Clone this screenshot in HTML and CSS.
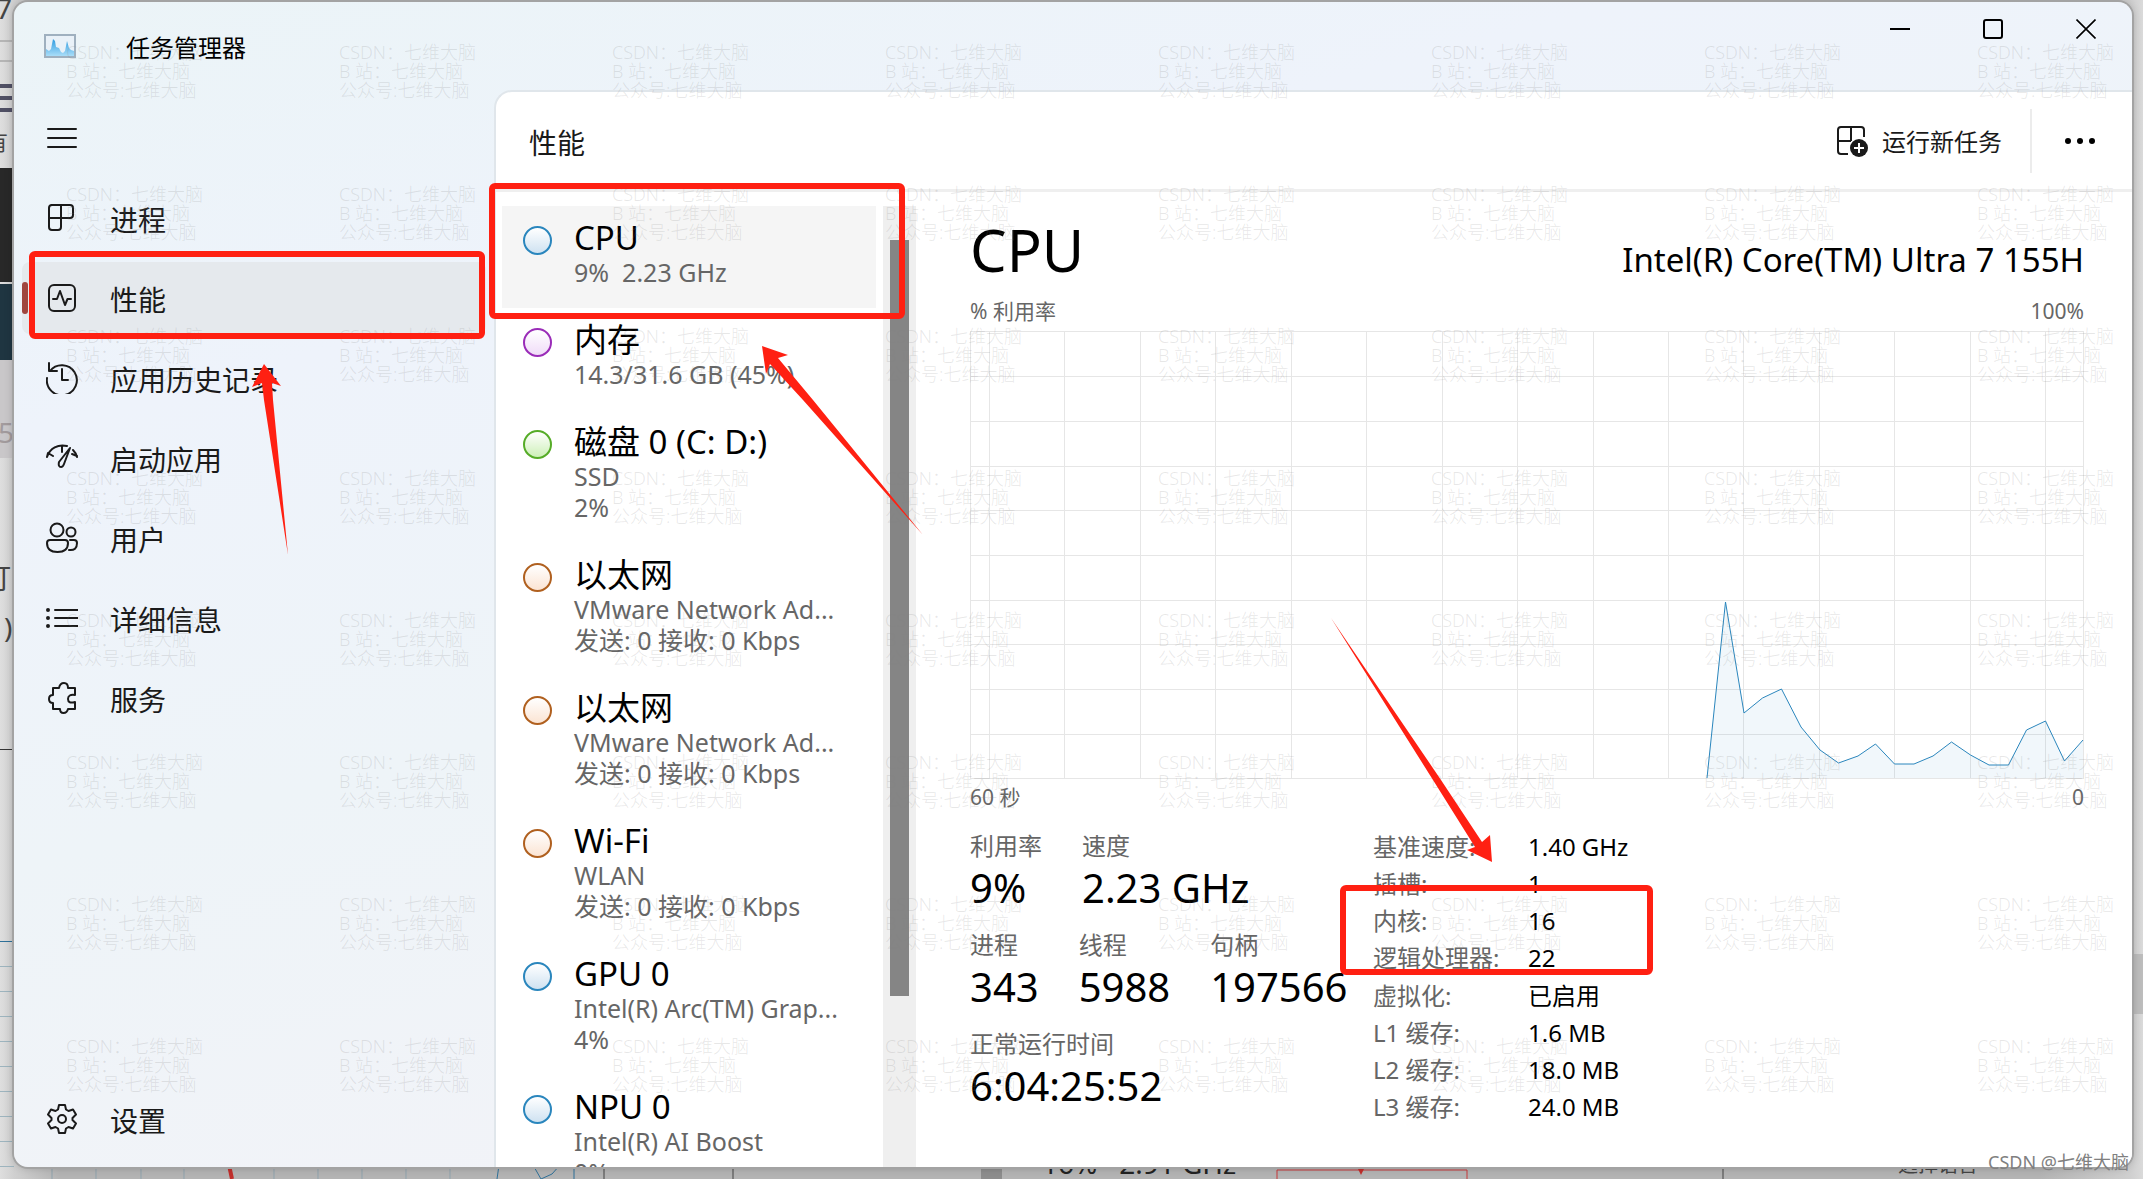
FILE: index.html
```html
<!DOCTYPE html>
<html lang="zh-CN">
<head>
<meta charset="utf-8">
<title>任务管理器</title>
<link rel="stylesheet" href="styles.css">
</head>
<body>
<div class="desktop">
  <div class="backdrop" aria-hidden="true">
    <span class="bd-strip bd-bar"></span>
    <span class="bd-strip bd-dark"></span>
    <span class="bd-strip bd-teal"></span>
    <span class="bd-strip bd-panel"></span>
    <span class="bd-strip bd-rule"></span>
    <span class="bd-strip bd-grid"></span>
    <span class="bd-menu"></span>
    <span class="bd-side"></span>
    <svg class="bd-foot" width="2143" height="14">
      <path d="M52 0V14M96 0V14M141 0V14M184 0V14M274 0V14M318 0V14M362 0V14M406 0V14M450 0V14" stroke="#8fa3ad"/>
      <path d="M229 0L232 14" stroke="#c22f2c" stroke-width="4"/>
      <path d="M497 14L499 0M533 0L541 14L552 9L560 0M574 0V14" stroke="#2f7199" fill="none"/>
      <path d="M604 0V14M733 0V14M1723 0V14" stroke="#444"/>
      <path d="M981 0H1002V14H981Z" fill="#8d8d8d"/>
      <path d="M1277 14V5H1467V14" stroke="#c8393a" fill="none"/>
      <path d="M1357 2H1365L1361 10Z" fill="#c22f2c"/>
    </svg>
    <span class="bd-text bd-seven">7</span>
    <span class="bd-text bd-have">有</span>
    <span class="bd-text bd-five">5</span>
    <span class="bd-text bd-hit">打</span>
    <span class="bd-text bd-paren">)</span>
    <span class="bd-text bd-speed">16%&nbsp;&nbsp; 2.91 GHz</span>
    <span class="bd-text bd-lang">选择语言</span>
  </div>

  <div class="window">
    <header class="titlebar">
      <svg class="app-icon" width="32" height="24" viewBox="0 0 32 24">
        <defs><linearGradient id="appfill" x1="0" y1="0" x2="0" y2="1"><stop offset="0" stop-color="#2f9be0"/><stop offset="1" stop-color="#a9ddf8"/></linearGradient></defs>
        <rect x="1" y="1" width="30" height="22" fill="#e9f1f8" stroke="#9fb0bf" stroke-width="2"/>
        <path d="M2 22V15L5 17L7 15L9 5L11 7L12 13L15 14L17 18L19 19L21 17L23 7L25 14L27 16L30 17V22Z" fill="url(#appfill)"/>
      </svg>
      <h1 class="app-title">任务管理器</h1>
      <div class="caption">
        <button type="button" aria-label="最小化"><svg width="20" height="20"><path d="M0 10H20" stroke="#000" stroke-width="2"/></svg></button>
        <button type="button" aria-label="最大化"><svg width="20" height="20"><rect x="1" y="1" width="18" height="18" rx="2" fill="none" stroke="#000" stroke-width="2"/></svg></button>
        <button type="button" aria-label="关闭"><svg width="20" height="20"><path d="M0.500 0.500L19.500 19.500M19.500 0.500L0.500 19.500" stroke="#000" stroke-width="1.600"/></svg></button>
      </div>
    </header>

    <nav class="sidebar">
      <button type="button" class="nav-item" aria-label="菜单"><svg width="32" height="32" viewBox="0 0 32 32"><path d="M2 7H30M2 16H30M2 25H30"/></svg></button>
      <button type="button" class="nav-item"><svg width="32" height="32" viewBox="0 0 32 32"><path d="M5 3H24Q27 3 27 6V13Q27 16 24 16H3V6Q3 3 6 3M15 3V25Q15 28 12 28H6Q3 28 3 25V15"/></svg><span>进程</span></button>
      <button type="button" class="nav-item active"><svg width="32" height="32" viewBox="0 0 32 32"><rect x="3" y="3" width="26" height="26" rx="5"/><path d="M7 17H11L14 9L19 23L21.500 17H25"/></svg><span>性能</span></button>
      <button type="button" class="nav-item"><svg width="32" height="32" viewBox="0 0 32 32"><path d="M4 9A15 15 0 1 1 1 16M3 1V9H11M16 7V18H22"/></svg><span>应用历史记录</span></button>
      <button type="button" class="nav-item"><svg width="32" height="32" viewBox="0 0 32 32"><path d="M1 15C4 6 12 2 21 4M1 15L2 11L7 14M16 4V10M31 15Q30 11 27 8M31 14L26 12M24 6L13 20Q12 25 15 25Q17 25 18 22Z"/></svg><span>启动应用</span></button>
      <button type="button" class="nav-item"><svg width="32" height="32" viewBox="0 0 32 32"><circle cx="11" cy="8" r="6.500"/><circle cx="25" cy="10" r="4.500"/><path d="M4 18H19Q22 18 22 21Q22 30 11.500 30Q1 30 1 21Q1 18 4 18ZM24 18H28Q31 18 31 21Q31 29 23 28"/></svg><span>用户</span></button>
      <button type="button" class="nav-item"><svg width="32" height="32" viewBox="0 0 32 32"><path d="M9 8H32M9 16H32M9 24H32"/><path class="solid" d="M0 8a2 2 0 1 0 4 0a2 2 0 1 0-4 0M0 16a2 2 0 1 0 4 0a2 2 0 1 0-4 0M0 24a2 2 0 1 0 4 0a2 2 0 1 0-4 0"/></svg><span>详细信息</span></button>
      <button type="button" class="nav-item"><svg width="32" height="32" viewBox="0 0 32 32"><path d="M7 6H13Q14 1 18 1Q22 1 22 6H29V13Q22 12 22 17Q22 22 29 20V27H22Q21 31 17.500 31Q14 31 14 27H7V21Q3 21 3 17Q3 13 7 13Z"/></svg><span>服务</span></button>
      <button type="button" class="nav-item settings"><svg width="32" height="32" viewBox="0 0 32 32"><circle cx="16" cy="16" r="4"/><path d="M13 2H19L20 6.500L22.500 8L27 6.500L30 11.500L26.500 15V17L30 20.500L27 25.500L22.500 24L20 25.500L19 30H13L12 25.500L9.500 24L5 25.500L2 20.500L5.500 17V15L2 11.500L5 6.500L9.500 8L12 6.500Z"/></svg><span>设置</span></button>
    </nav>

    <section class="content">
      <div class="toolbar">
        <h2>性能</h2>
        <button type="button" class="run-task"><svg width="32" height="32" viewBox="0 0 32 32"><path d="M12 29H5Q2 29 2 26V5Q2 2 5 2H25Q28 2 28 5V12M2 16H15M15 2V16" fill="none" stroke="#1a1a1a" stroke-width="2"/><circle cx="23" cy="23" r="9" fill="#1a1a1a"/><path d="M18 23H28M23 18V28" stroke="#fff" stroke-width="2"/></svg>运行新任务</button>
        <button type="button" class="more" aria-label="更多"><svg width="34" height="8"><circle cx="5" cy="4" r="3"/><circle cx="17" cy="4" r="3"/><circle cx="29" cy="4" r="3"/></svg></button>
      </div>

      <div class="body">
        <div class="devices">
          <button type="button" class="device blue selected"><i class="dot"></i><span class="name">CPU</span><span class="sub">9%&nbsp; 2.23 GHz</span></button>
          <button type="button" class="device purple"><i class="dot"></i><span class="name">内存</span><span class="sub">14.3/31.6 GB (45%)</span></button>
          <button type="button" class="device green"><i class="dot"></i><span class="name">磁盘 0 (C: D:)</span><span class="sub">SSD</span><span class="sub">2%</span></button>
          <button type="button" class="device orange"><i class="dot"></i><span class="name">以太网</span><span class="sub">VMware Network Ad...</span><span class="sub">发送: 0 接收: 0 Kbps</span></button>
          <button type="button" class="device orange"><i class="dot"></i><span class="name">以太网</span><span class="sub">VMware Network Ad...</span><span class="sub">发送: 0 接收: 0 Kbps</span></button>
          <button type="button" class="device orange"><i class="dot"></i><span class="name">Wi-Fi</span><span class="sub">WLAN</span><span class="sub">发送: 0 接收: 0 Kbps</span></button>
          <button type="button" class="device blue"><i class="dot"></i><span class="name">GPU 0</span><span class="sub">Intel(R) Arc(TM) Grap...</span><span class="sub">4%</span></button>
          <button type="button" class="device blue"><i class="dot"></i><span class="name">NPU 0</span><span class="sub">Intel(R) AI Boost</span><span class="sub">0%</span></button>
        </div>
        <div class="scrollbar"><div class="thumb"></div></div>

        <main class="detail">
          <div class="heading"><h3>CPU</h3><p>Intel(R) Core(TM) Ultra 7 155H</p></div>
          <div class="axis"><span>% 利用率</span><span>100%</span></div>
          <svg class="chart" viewBox="0 0 1114 448" preserveAspectRatio="none">
            <path class="grid" d="M0.500 0V448M19.500 0V448M94.500 0V448M170.500 0V448M245.500 0V448M321.500 0V448M396.500 0V448M472.500 0V448M547.500 0V448M623.500 0V448M698.500 0V448M773.500 0V448M849.500 0V448M924.500 0V448M1000.500 0V448M1075.500 0V448M1113.500 0V448M0 0.500H1114M0 45.500H1114M0 90.500H1114M0 135.500H1114M0 179.500H1114M0 224.500H1114M0 269.500H1114M0 313.500H1114M0 358.500H1114M0 403.500H1114M0 447.500H1114"/>
            <path class="area" d="M737 447L755.500 271L774 382L792.500 367L811.500 358L831 396L850 419L868.500 432L888 425L905.500 413L924.500 433L944 433L963 425L981.500 411L1000.500 424L1019 434H1038.500L1056.500 399L1075.500 390L1094.500 430L1113 409V447Z"/>
            <path class="line" d="M737 447L755.500 271L774 382L792.500 367L811.500 358L831 396L850 419L868.500 432L888 425L905.500 413L924.500 433L944 433L963 425L981.500 411L1000.500 424L1019 434H1038.500L1056.500 399L1075.500 390L1094.500 430L1113 409"/>
          </svg>
          <div class="axis below"><span>60 秒</span><span>0</span></div>
          <div class="figures">
            <div class="stats">
              <dl><div><dt>利用率</dt><dd>9%</dd></div><div><dt>速度</dt><dd>2.23 GHz</dd></div></dl>
              <dl><div><dt>进程</dt><dd>343</dd></div><div><dt>线程</dt><dd>5988</dd></div><div><dt>句柄</dt><dd>197566</dd></div></dl>
              <dl><div><dt>正常运行时间</dt><dd>6:04:25:52</dd></div></dl>
            </div>
            <table class="facts">
              <tr><th scope="row">基准速度:</th><td>1.40 GHz</td></tr>
              <tr><th scope="row">插槽:</th><td>1</td></tr>
              <tr><th scope="row">内核:</th><td>16</td></tr>
              <tr><th scope="row">逻辑处理器:</th><td>22</td></tr>
              <tr><th scope="row">虚拟化:</th><td>已启用</td></tr>
              <tr><th scope="row">L1 缓存:</th><td>1.6 MB</td></tr>
              <tr><th scope="row">L2 缓存:</th><td>18.0 MB</td></tr>
              <tr><th scope="row">L3 缓存:</th><td>24.0 MB</td></tr>
            </table>
          </div>
        </main>
      </div>
    </section>
  </div>

  <div class="watermarks" id="watermarks"></div>
  <svg class="marks" width="2143" height="1179" aria-hidden="true">
    <g fill="none" stroke="#ff2012" stroke-width="6">
      <rect x="32" y="254" width="450" height="82" rx="3"/>
      <rect x="492" y="186" width="410" height="130" rx="3"/>
      <rect x="1343" y="888" width="307" height="84" rx="3"/>
    </g>
    <g fill="#ff2012">
      <path d="M264 364L281 386L272 383L273 400L288 555L264 400L262 383L252 387Z"/>
      <path d="M762 346L788 355L778 358L813 400L923 535L803 400L770 364L766 374Z"/>
      <path d="M1492 862L1490 835L1482 842L1441 780L1331 618L1433 780L1475 847L1467 850Z"/>
    </g>
  </svg>
  <p class="credit">CSDN @七维大脑</p>
</div>
<script src="script.js"></script>
</body>
</html>
```
FILE: script.js
```js
// Fill the overlay with repeated author marks
const layer = document.getElementById("watermarks");
for (let i = 0; i < 64; i++) {
  const mark = document.createElement("p");
  mark.innerHTML = "CSDN：七维大脑<br>B 站：七维大脑<br>公众号:七维大脑";
  layer.append(mark);
}
```
FILE: styles.css
```css
* { box-sizing: border-box; }
body {
  margin: 0;
  font-family: "Noto Sans", "Noto Sans CJK SC", sans-serif;
  color: #000;
  background: #d9d9d9;
}
h1, h2, h3, p, dl, dd { margin: 0; font-weight: 400; }
button { font: inherit; color: inherit; border: 0; background: none; padding: 0; text-align: left; }
.desktop { position: relative; height: 100vh; padding: 2px 11px 12px 14px; overflow: hidden; }

/* what shows round the window's edges */
.backdrop { position: absolute; inset: 0; overflow: hidden; background: linear-gradient(90deg, #dedede, #d0d0d0 14px, #b4b4b4 60px, #b4b4b4 2040px, #cfcfcf 2130px, #dadada); }
.bd-strip { position: absolute; left: 0; width: 14px; }
.bd-bar { top: 40px; height: 22px; border-top: 2px solid #b5b5b5; border-bottom: 2px solid #b5b5b5; }
.bd-dark { top: 168px; height: 114px; background: #282828; }
.bd-teal { top: 284px; height: 76px; background: #1f3541; }
.bd-panel { top: 360px; height: 98px; background: #c9c7c9; }
.bd-rule { top: 749px; height: 1px; background: #333; }
.bd-grid { top: 941px; height: 238px; border-top: 1px solid #2f7199; background: repeating-linear-gradient(#0000 0 24px, #9db4be 24px 25px); }
.bd-menu { position: absolute; left: 0; top: 84px; width: 14px; height: 28px; border-top: 4px solid #505064; border-bottom: 4px solid #505064; background: linear-gradient(#0000 8px, #505064 8px 12px, #0000 12px); }
.bd-side { position: absolute; right: 0; top: 954px; width: 11px; height: 60px; background: #bdbdbd; }
.bd-foot { position: absolute; left: 0; bottom: 0; }
.bd-text { position: absolute; font-size: 28px; line-height: 32px; color: #444; white-space: nowrap; }
.bd-seven { left: -4px; top: -8px; }
.bd-have { left: -14px; top: 125px; font-size: 22px; }
.bd-five { left: -2px; top: 416px; color: #a29b9d; }
.bd-hit { left: -17px; top: 562px; }
.bd-paren { left: 4px; top: 611px; }
.bd-speed { left: 1042px; top: 1147px; color: #222; }
.bd-lang { left: 1898px; top: 1149px; font-size: 20px; }

.window {
  position: relative;
  height: 100%;
  display: grid;
  grid-template: 88px minmax(0, 1fr) / 480px minmax(0, 1fr);
  overflow: hidden;
  border-radius: 14px;
  box-shadow: 0 0 0 2px #a3a3a3, 0 0 10px #0004;
  background: linear-gradient(165deg, #ebf4f7 0, #eef3fb 25%, #eef4f8 50%, #f2f3f8 80%);
}
.titlebar { grid-column: 1 / -1; display: flex; align-items: center; padding-left: 30px; }
.app-title { flex: 1; padding: 4px 0 0 50px; font-size: 24px; line-height: 32px; }
.caption { display: flex; align-self: flex-start; }
.caption button { width: 93px; height: 54px; display: grid; place-items: center; }

.sidebar { display: flex; flex-direction: column; gap: 8px; padding: 12px 8px; }
.nav-item { position: relative; display: flex; align-items: center; gap: 32px; height: 72px; padding-left: 24px; border-radius: 8px; font-size: 28px; line-height: 40px; color: #1a1a1a; }
.nav-item span { padding-top: 4px; }
.nav-item svg { fill: none; stroke: #1a1a1a; stroke-width: 2; stroke-linecap: round; stroke-linejoin: round; }
.nav-item .solid { fill: #1a1a1a; stroke: none; }
.nav-item.active { background: #e5e9ed; }
.nav-item.active::before { content: ""; position: absolute; left: 0; top: 20px; width: 6px; height: 32px; border-radius: 3px; background: #a0463f; }
.settings { margin-top: auto; }

.content { display: flex; flex-direction: column; min-height: 0; border: solid #e0e6eb; border-width: 2px 0 0 2px; border-top-left-radius: 18px; background: #fff; }
.toolbar { display: flex; align-items: center; height: 100px; padding: 0 20px 0 33px; border-bottom: 3px solid #efefef; }
.toolbar h2 { flex: 1; padding-top: 4px; font-size: 28px; line-height: 40px; color: #1a1a1a; }
.run-task { display: flex; align-items: center; gap: 14px; height: 64px; padding-right: 28px; border-right: 2px solid #ececec; font-size: 24px; color: #1a1a1a; }
.more { width: 80px; height: 64px; display: grid; place-items: center end; padding-right: 15px; }

.body { flex: 1; min-height: 0; display: grid; grid-template-columns: 387px 33px minmax(0, 1fr); }
.devices { padding: 14px 7px 0 6px; overflow: hidden; }
.device { position: relative; display: block; width: 100%; padding: 13px 0 20px 72px; white-space: nowrap; }
.device.selected { background: #f5f5f5; }
.name, .sub { display: block; }
.name { font-size: 33px; line-height: 38px; }
.sub { font-size: 25px; line-height: 31px; color: #666; }
.dot { position: absolute; left: 21px; top: 20px; width: 29px; height: 29px; border: 2px solid; border-radius: 50%; }
.blue .dot { border-color: #2a86bd; background: linear-gradient(#fff, #cfe2f1); }
.purple .dot { border-color: #9a2cb8; background: linear-gradient(#fff, #f0dcf8); }
.green .dot { border-color: #56ac28; background: linear-gradient(#fff, #cdf0b8); }
.orange .dot { border-color: #b0601f; background: linear-gradient(#fff, #fbe4d3); }
.scrollbar { margin-top: 14px; padding: 34px 7px 0; background: #efefef; }
.thumb { height: 81.500%; background: #858585; }

.detail { display: flex; flex-direction: column; min-width: 0; padding: 18px 48px 42px 54px; }
.heading { display: flex; align-items: baseline; justify-content: space-between; }
.heading h3 { font-size: 58px; line-height: 80px; }
.heading p { font-size: 33px; line-height: 40px; }
.axis { display: flex; justify-content: space-between; padding: 7px 0 6px; font-size: 21px; line-height: 28px; color: #666; }
.axis.below { padding: 4px 0 17px; }
.chart { display: block; width: 100%; flex: 1; min-height: 0; }
.chart path { fill: none; stroke-width: 1px; vector-effect: non-scaling-stroke; }
.chart .grid { stroke: #e6e6e6; }
.chart .area { fill: #1177bb; fill-opacity: .06; }
.chart .line { stroke: #2a86bd; }
.figures { display: grid; grid-template-columns: 403px 1fr; }
.stats dl { display: flex; gap: 40px; height: 99px; }
.stats dt { font-size: 24px; line-height: 36px; color: #666; }
.stats dd { font-size: 40px; line-height: 48px; white-space: nowrap; }
.facts { border-collapse: collapse; justify-self: start; font-size: 24px; line-height: 37px; }
.facts th, .facts td { padding: 0; height: 37px; font-weight: 400; text-align: left; white-space: nowrap; }
.facts th { width: 155px; color: #666; }

.watermarks { position: absolute; left: 66px; top: 43px; display: grid; grid-template-columns: repeat(8, 273px); grid-auto-rows: 142px; color: #80808030; font-size: 18px; line-height: 19px; pointer-events: none; }
.watermarks p { white-space: nowrap; font-weight: 300; }
.marks { position: absolute; left: 0; top: 0; pointer-events: none; }
.credit { position: absolute; right: 14px; bottom: 4px; font-size: 18px; line-height: 26px; color: #808080; }
```
